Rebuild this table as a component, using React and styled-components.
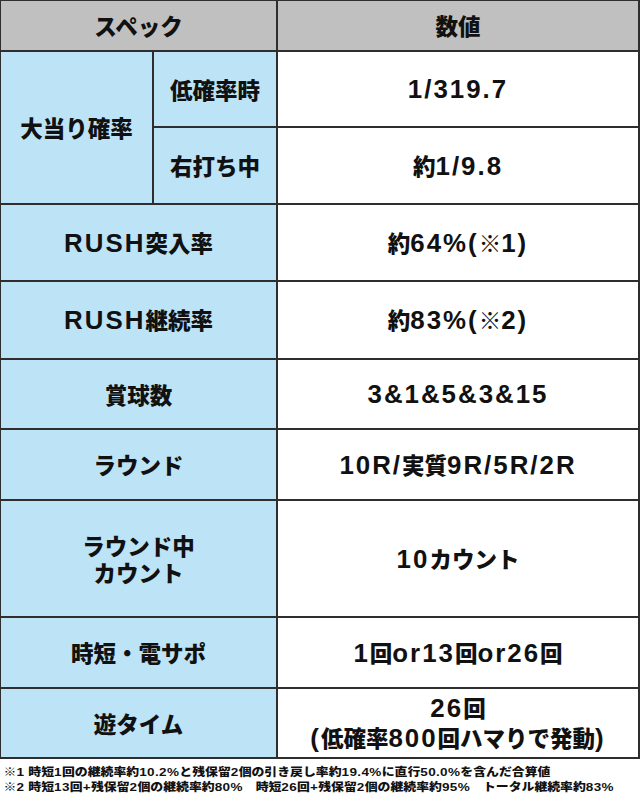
import React from 'react';
import styled, { createGlobalStyle } from 'styled-components';

const GlobalStyle = createGlobalStyle`
	body {
		margin: 0;
		background: #fff;
		color: #111;
		font-family: "Noto Sans CJK JP", "Liberation Sans", sans-serif;
		font-weight: 900;
	}
`;

const Page = styled.div`
	width: 640px;
	height: 795px;
	overflow: hidden;
`;

const SpecGrid = styled.div`
	display: grid;
	grid-template-columns: 151px 122px 1fr;
	grid-template-rows: 49px 74px 75px 75px 76px 68px 69px 115px 69px 68px;
	gap: 2px;
	padding: 1px 2px 2px 1px;
	width: 640px;
	box-sizing: border-box;
	background: #2e2e2e;
`;

const tones = {
	head: '#c0c0c0',
	label: '#bde3f7',
	value: '#ffffff',
};

const Cell = styled.div`
	display: flex;
	align-items: center;
	justify-content: center;
	text-align: center;
	background: ${(p) => tones[p.$tone]};
	grid-column: ${(p) => p.$cols || 'auto'};
	grid-row: ${(p) => p.$rows || 'auto'};
	font-size: 22.5px;
	line-height: ${(p) => (p.$tone === 'value' ? '29px' : '27px')};
	color: #111;
`;

const CellText = styled.span`
	display: block;
	white-space: pre-line;
`;

const Latin = styled.span`
	font-family: "Liberation Sans", "Noto Sans CJK JP", sans-serif;
	font-weight: 700;
	font-size: 1.15em;
	letter-spacing: 2px;
`;

const Notes = styled.div`
	padding: 6px 0 0 3px;
	font-size: 11px;
	line-height: 13.5px;
	transform: scaleX(1.17);
	transform-origin: left top;
	white-space: nowrap;
	color: #111;

	${Latin} {
		letter-spacing: 0.3px;
		font-size: 1.05em;
	}
`;

const Mixed = ({ text }) =>
	text.split(/([\x20-\x7e]+)/).map((part, i) =>
		/^[\x20-\x7e]+$/.test(part) ? <Latin key={i}>{part}</Latin> : part
	);

const rows = [
	{ label: 'RUSH突入率', value: '約64%(※1)' },
	{ label: 'RUSH継続率', value: '約83%(※2)' },
	{ label: '賞球数', value: '3&1&5&3&15' },
	{ label: 'ラウンド', value: '10R/実質9R/5R/2R' },
	{ label: 'ラウンド中\nカウント', value: '10カウント' },
	{ label: '時短・電サポ', value: '1回or13回or26回' },
	{ label: '遊タイム', value: '26回\n(低確率800回ハマりで発動)' },
];

const notes = [
	'※1 時短1回の継続率約10.2%と残保留2個の引き戻し率約19.4%に直行50.0%を含んだ合算値',
	'※2 時短13回+残保留2個の継続率約80%　時短26回+残保留2個の継続率約95%　トータル継続率約83%',
];

const App = () => (
	<Page>
		<GlobalStyle />
		<SpecGrid>
			<Cell $tone="head" $cols="span 2">スペック</Cell>
			<Cell $tone="head">数値</Cell>

			<Cell $tone="label" $rows="span 2">大当り確率</Cell>
			<Cell $tone="label">低確率時</Cell>
			<Cell $tone="value"><CellText><Mixed text="1/319.7" /></CellText></Cell>
			<Cell $tone="label">右打ち中</Cell>
			<Cell $tone="value"><CellText><Mixed text="約1/9.8" /></CellText></Cell>

			{rows.map((r) => (
				<React.Fragment key={r.label}>
					<Cell $tone="label" $cols="span 2">
						<CellText><Mixed text={r.label} /></CellText>
					</Cell>
					<Cell $tone="value">
						<CellText><Mixed text={r.value} /></CellText>
					</Cell>
				</React.Fragment>
			))}
		</SpecGrid>
		<Notes>
			{notes.map((n) => (
				<div key={n}><Mixed text={n} /></div>
			))}
		</Notes>
	</Page>
);

export default App;
